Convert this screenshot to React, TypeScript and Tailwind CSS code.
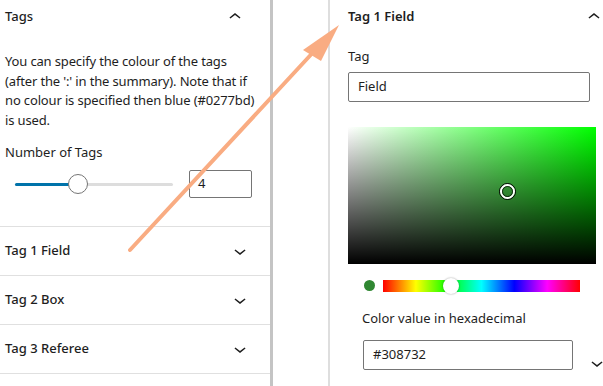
import React from 'react';

const ChevronUp: React.FC = () => (
  <svg width="24" height="24" viewBox="0 0 24 24" className="fill-[#1e1e1e]">
    <path d="M6.5 12.4L12 8l5.5 4.4-.9 1.2L12 10l-4.6 3.6-1-1.2z" />
  </svg>
);

const ChevronDown: React.FC = () => (
  <svg width="24" height="24" viewBox="0 0 24 24" className="fill-[#1e1e1e]">
    <path d="M17.5 11.6L12 16l-5.5-4.4.9-1.2L12 14l4.6-3.6 1 1.2z" />
  </svg>
);

const TAG_ROWS = ['Tag 1 Field', 'Tag 2 Box', 'Tag 3 Referee'];

const App: React.FC = () => {
  return (
    <div className="relative flex w-[603px] h-[386px] overflow-hidden bg-white text-[13px] text-[#1e1e1e] font-['Noto_Sans',sans-serif]">
      {/* Left sidebar */}
      <div className="w-[270px] shrink-0 flex flex-col">
        <div className="px-[5px]">
          <div className="h-[34px] flex items-center justify-between pr-[18px]">
            <span className="font-medium">Tags</span>
            <ChevronUp />
          </div>
          <p className="mt-[18px] leading-[19.5px] tracking-[-0.15px] -mr-[4px] whitespace-nowrap">
            You can specify the colour of the tags
            <br />
            (after the ':' in the summary). Note that if
            <br />
            no colour is specified then blue (#0277bd)
            <br />
            is used.
          </p>
          <div className="mt-[12px] leading-[20px]">Number of Tags</div>
          <div className="mt-[8px] flex items-center">
            <div className="relative ml-[10px] w-[158px] h-[28px] flex items-center">
              <div className="w-full h-[3px] bg-[#dddddd] rounded-full" />
              <div className="absolute left-0 w-[63px] h-[3px] bg-[#0073aa] rounded-full" />
              <div className="absolute left-[53px] w-[20px] h-[20px] rounded-full bg-white border border-[#757575]" />
            </div>
            <div className="ml-[16px] w-[63px] h-[28px] border border-[#757575] rounded-[2px] flex items-center px-[8px] text-[13px]">
              4
            </div>
          </div>
        </div>
        <div className="mt-[28px]">
          {TAG_ROWS.map((label) => (
            <div
              key={label}
              className="h-[49px] border-t border-[#e0e0e0] flex items-center justify-between pl-[5px] pr-[18px]"
            >
              <span className="font-medium">{label}</span>
              <ChevronDown />
            </div>
          ))}
          <div className="border-t border-[#e0e0e0]" />
        </div>
      </div>

      {/* scrollbar edge */}
      <div className="w-[3px] shrink-0 bg-[#c4c4c4]" />

      <div className="w-[55px] shrink-0" />

      {/* Right sidebar */}
      <div className="flex-1 border-l-2 border-[#dedede] pl-[18px] pr-[4px]">
        <div className="h-[34px] flex items-center justify-between pr-[3px]">
          <span className="font-semibold">Tag 1 Field</span>
          <ChevronUp />
        </div>
        <div className="mt-[12px] leading-[20px]">Tag</div>
        <div className="mt-[6px] w-[242px] h-[30px] border border-[#757575] rounded-[2px] flex items-center px-[9px]">
          Field
        </div>
        <div className="relative mt-[25px] w-[248px] h-[137px] bg-[linear-gradient(to_top,#000,transparent),linear-gradient(to_right,#fff,#00ff00)]">
          <div className="absolute left-[151px] top-[56px] w-[17px] h-[17px] rounded-full border border-black">
            <div className="w-full h-full rounded-full border-2 border-white">
              <div className="w-full h-full rounded-full border border-black/70" />
            </div>
          </div>
        </div>
        <div className="mt-[15px] flex items-center pl-[16px] h-[13px]">
          <div className="w-[11px] h-[11px] rounded-full bg-[#308732]" />
          <div className="relative ml-[8px] w-[197px] h-[12px] bg-[linear-gradient(to_right,#ff0000,#ffff00,#00ff00,#00ffff,#0000ff,#ff00ff,#ff0000)]">
            <div className="absolute left-[60px] top-[-2px] w-[16px] h-[16px] rounded-full bg-white shadow-[0_0_2px_rgba(0,0,0,0.4)]" />
          </div>
        </div>
        <div className="mt-[16px] pl-[14px] leading-[20px]">Color value in hexadecimal</div>
        <div className="mt-[7px] flex items-center">
          <div className="ml-[15px] w-[210px] h-[30px] border border-[#757575] rounded-[2px] flex items-center px-[9px]">
            #308732
          </div>
          <div className="ml-[12px] mt-[16px]">
            <ChevronDown />
          </div>
        </div>
      </div>

      {/* annotation arrow */}
      <svg className="absolute left-0 top-0 pointer-events-none" width="603" height="386">
        <line x1="130" y1="250" x2="318" y2="47" stroke="#f9ac82" strokeWidth="4" strokeLinecap="round" />
        <polygon points="339,25 303,50 321,61" fill="#f9ac82" />
      </svg>
    </div>
  );
};

export default App;
